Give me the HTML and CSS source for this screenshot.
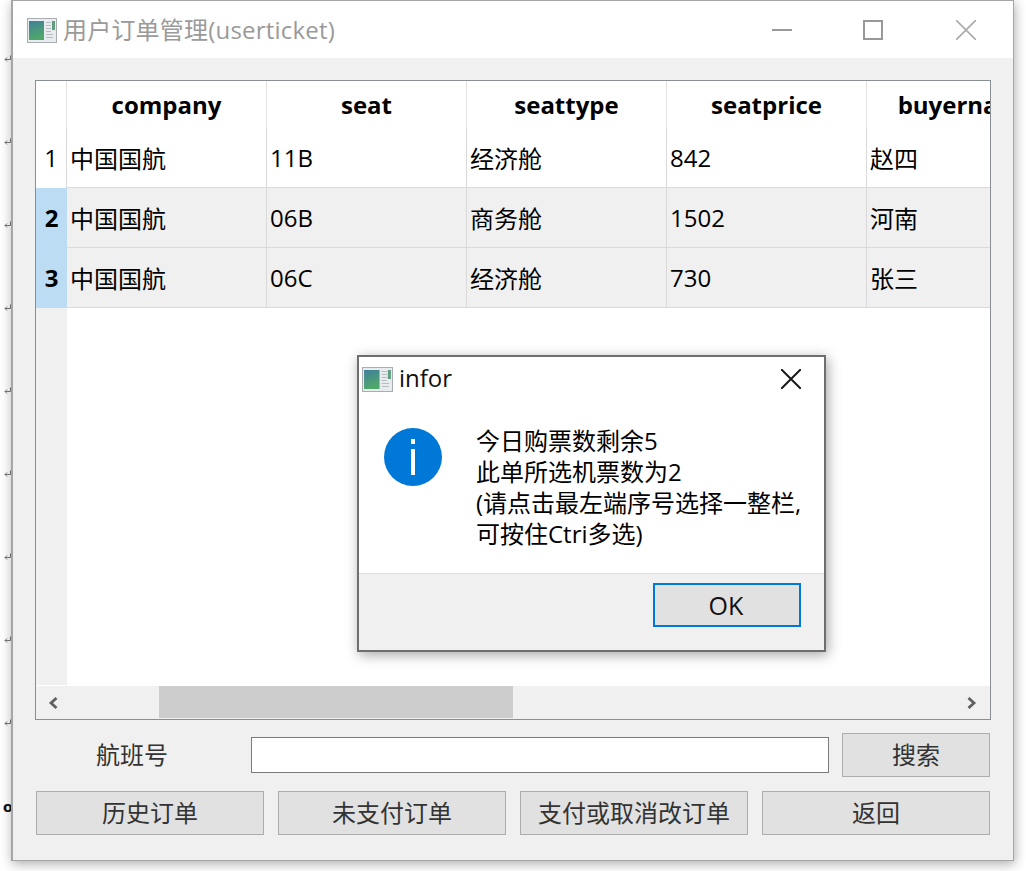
FILE: index.html
```html
<!DOCTYPE html>
<html>
<head>
  <meta charset="utf-8">
  <title>用户订单管理(userticket)</title>
  <link rel="stylesheet" href="styles.css">
</head>
<body>
  <svg class="defs" width="0" height="0">
    <symbol id="appicon" viewBox="0 0 30 25" preserveAspectRatio="none">
      <defs>
        <linearGradient id="pane" x1="0" y1="0" x2="0.3" y2="1">
          <stop offset="0" stop-color="#3f7f9a"/>
          <stop offset="1" stop-color="#4fa86a"/>
        </linearGradient>
      </defs>
      <rect x="0.5" y="0.5" width="29" height="24" fill="#e8ecef" stroke="#a9adb1"/>
      <rect x="2" y="3" width="15" height="19" fill="url(#pane)"/>
      <rect x="19" y="4" width="5" height="1" fill="#b5bcc2"/>
      <rect x="19" y="7" width="5" height="1" fill="#b5bcc2"/>
      <rect x="19" y="10" width="5" height="1" fill="#b5bcc2"/>
      <rect x="19" y="13" width="5" height="1" fill="#b5bcc2"/>
      <rect x="19" y="16" width="7" height="1" fill="#b5bcc2"/>
      <rect x="19" y="19" width="7" height="1" fill="#b5bcc2"/>
      <rect x="25" y="3" width="3" height="9" fill="#5f9f80"/>
    </symbol>
    <symbol id="retmark" viewBox="0 0 8 8">
      <path d="M6.500 0.500v4H1M3 2.500L1 4.500l2 2" fill="none" stroke="#777" stroke-width="1"/>
    </symbol>
  </svg>

  <div class="gutter">
    <div class="mark"><svg class="ret"><use href="#retmark"/></svg></div>
    <div class="mark"><svg class="ret"><use href="#retmark"/></svg></div>
    <div class="mark"><svg class="ret"><use href="#retmark"/></svg></div>
    <div class="mark"><svg class="ret"><use href="#retmark"/></svg></div>
    <div class="mark"><svg class="ret"><use href="#retmark"/></svg></div>
    <div class="mark"><svg class="ret"><use href="#retmark"/></svg></div>
    <div class="mark"><svg class="ret"><use href="#retmark"/></svg></div>
    <div class="mark"><svg class="ret"><use href="#retmark"/></svg></div>
    <div class="mark"><svg class="ret"><use href="#retmark"/></svg></div>
    <div class="mark mark-o">o</div>
  </div>

  <div class="window">
    <div class="titlebar">
      <svg class="app-icon"><use href="#appicon"/></svg>
      <span class="title">用户订单管理(userticket)</span>
      <svg class="ctl ctl-min" width="20" height="20" viewBox="0 0 20 20"><path d="M0 10h20" stroke="#999" stroke-width="2"/></svg>
      <svg class="ctl ctl-max" width="20" height="20" viewBox="0 0 20 20"><rect x="1" y="1" width="18" height="18" fill="none" stroke="#999" stroke-width="2"/></svg>
      <svg class="ctl" width="20" height="20" viewBox="0 0 20 20"><path d="M0 0l20 20M20 0L0 20" stroke="#aaa" stroke-width="1.600"/></svg>
    </div>

    <div class="content">
      <div class="frame">
        <div class="viewport">
          <table class="grid">
            <thead>
              <tr>
                <th class="corner"></th>
                <th>company</th>
                <th>seat</th>
                <th>seattype</th>
                <th>seatprice</th>
                <th>buyername</th>
              </tr>
            </thead>
            <tbody>
              <tr>
                <th class="rowno">1</th>
                <td>中国国航</td><td>11B</td><td>经济舱</td><td>842</td><td>赵四</td>
              </tr>
              <tr class="selected">
                <th class="rowno">2</th>
                <td>中国国航</td><td>06B</td><td>商务舱</td><td>1502</td><td>河南</td>
              </tr>
              <tr class="selected">
                <th class="rowno">3</th>
                <td>中国国航</td><td>06C</td><td>经济舱</td><td>730</td><td>张三</td>
              </tr>
              <tr class="filler">
                <th></th>
                <td colspan="5"></td>
              </tr>
            </tbody>
          </table>
        </div>
        <div class="hscroll">
          <svg class="arrow arrow-left" width="10" height="12" viewBox="0 0 10 12"><path d="M8.500 1L3 6l5.500 5" fill="none" stroke="#606060" stroke-width="2.800"/></svg>
          <div class="track"><div class="thumb"></div></div>
          <svg class="arrow arrow-right" width="10" height="12" viewBox="0 0 10 12"><path d="M1.500 1L7 6l-5.500 5" fill="none" stroke="#606060" stroke-width="2.800"/></svg>
        </div>
      </div>

      <div class="search-row">
        <label class="search-label">航班号</label>
        <input class="search-input" type="text">
        <button class="btn btn-search">搜索</button>
      </div>

      <div class="action-row">
        <button class="btn">历史订单</button>
        <button class="btn">未支付订单</button>
        <button class="btn">支付或取消改订单</button>
        <button class="btn">返回</button>
      </div>
    </div>
  </div>

  <div class="dialog">
    <div class="dialog-body">
      <div class="dialog-title">
        <svg class="dialog-icon"><use href="#appicon"/></svg>
        <span class="dialog-name">infor</span>
        <svg class="dialog-close" width="20" height="20" viewBox="0 0 20 20"><path d="M0 0l20 20M20 0L0 20" stroke="#1a1a1a" stroke-width="2"/></svg>
      </div>
      <div class="dialog-msg">
        <svg class="info" width="58" height="58" viewBox="0 0 58 58">
          <circle cx="29" cy="29" r="29" fill="#0078d7"/>
          <rect x="27" y="11" width="4" height="5" fill="#fff"/>
          <rect x="27" y="21" width="4" height="26" fill="#fff"/>
        </svg>
        <p class="msg-text">今日购票数剩余5<br>此单所选机票数为2<br>(请点击最左端序号选择一整栏,<br>可按住Ctri多选)</p>
      </div>
    </div>
    <div class="dialog-foot">
      <button class="btn-ok">OK</button>
    </div>
  </div>
</body>
</html>
```

FILE: styles.css
```css
* {
  box-sizing: border-box;
}
html, body {
  margin: 0;
  height: 871px;
  overflow: hidden;
  background: #fff;
}
body {
  display: flex;
  align-items: flex-start;
  font-family: "Open Sans", "Noto Sans CJK SC", sans-serif;
  font-size: 24px;
  color: #000;
}
.defs {
  position: absolute;
}

/* stray document text showing behind the window */
.gutter {
  width: 11px;
  padding-top: 55px;
  flex: none;
}
.mark {
  height: 83px;
}
.ret {
  display: block;
  width: 8px;
  height: 8px;
  margin-left: 4px;
}
.mark-o {
  margin-top: -2px;
  padding-left: 3px;
  line-height: 14px;
  font-family: "DejaVu Sans", sans-serif;
  font-weight: bold;
  font-size: 14px;
  color: #111;
}

.window {
  width: 1003px;
  height: 861px;
  flex: none;
  background: #f0f0f0;
  border: 1px solid #a6a6a6;
  border-left-width: 2px;
  box-shadow: 1px 3px 11px rgba(0, 0, 0, 0.32);
}
.titlebar {
  height: 57px;
  background: #fff;
  display: flex;
  align-items: center;
  padding-left: 14px;
}
.app-icon {
  width: 30px;
  height: 25px;
  margin-top: 1px;
}
.title {
  margin-left: 6px;
  color: #9a9a9a;
  line-height: 57px;
  letter-spacing: 0.2px;
  white-space: nowrap;
}
.ctl {
  flex: none;
  margin-right: 37px;
}
.ctl-min {
  margin-left: auto;
  margin-right: 71px;
}
.ctl-max {
  margin-right: 73px;
}
.content {
  padding: 22px 22px 0 22px;
}

.frame {
  width: 956px;
  height: 640px;
  border: 1px solid #8a8f96;
  background: #fff;
}
.viewport {
  height: 604px;
  overflow: hidden;
}
.grid {
  width: 1031px;
  height: 604px;
  table-layout: fixed;
  border-collapse: separate;
  border-spacing: 0;
}
.grid th, .grid td {
  padding: 0;
}
.grid thead th {
  height: 47px;
  width: 200px;
  font-weight: bold;
  text-align: center;
  border-right: 1px solid #e4e4e4;
  white-space: nowrap;
}
.grid thead th.corner {
  width: 31px;
}
.grid tbody tr {
  height: 60px;
}
.grid td {
  padding: 0 0 1px 3px;
  border-right: 1px solid #d9d9d9;
  border-bottom: 1px solid #d9d9d9;
  white-space: nowrap;
}
.grid .rowno {
  padding-bottom: 2px;
  font-weight: normal;
  border-right: 1px solid #d9d9d9;
  text-align: center;
}
.selected td {
  background: #f0f0f0;
}
.grid .selected .rowno {
  font-weight: bold;
  background: #bbdcf3;
  border-right: 0;
}
.grid tbody .filler {
  height: auto;
}
.filler th {
  background: #f0f0f0;
}
.grid .filler td {
  border: 0;
  background: #fff;
}

.hscroll {
  height: 33px;
  margin-top: 1px;
  background: #f0f0f0;
  display: flex;
  align-items: center;
}
.arrow {
  flex: none;
}
.arrow-left {
  margin: 0 14px 0 12px;
}
.arrow-right {
  margin: 0 13px 0 14px;
}
.track {
  flex: 1;
  height: 100%;
}
.thumb {
  margin-left: 87px;
  width: 354px;
  height: 32px;
  background: #cdcdcd;
}

.search-row {
  display: flex;
  align-items: center;
  gap: 13px;
  margin: 13px 1px 0;
  height: 44px;
}
.search-label {
  width: 202px;
  padding: 0 0 4px 60px;
  color: #333;
}
.search-input {
  width: 578px;
  height: 36px;
  margin-right: 0;
  border: 1px solid #7a7a7a;
  background: #fff;
}
.btn {
  height: 44px;
  width: 228px;
  font: inherit;
  color: #333;
  background: #e1e1e1;
  border: 1px solid #adadad;
  padding: 0 0 4px;
}
.btn-search {
  width: 148px;
}
.action-row {
  display: flex;
  gap: 14px;
  margin: 14px 1px 0;
}

.dialog {
  position: absolute;
  left: 357px;
  top: 355px;
  width: 469px;
  height: 297px;
  border: 2px solid #6e6e6e;
  background: #f0f0f0;
  box-shadow: 2px 3px 12px rgba(0, 0, 0, 0.35);
  display: flex;
  flex-direction: column;
}
.dialog-body {
  height: 217px;
  background: #fff;
  border-bottom: 1px solid #dfdfdf;
}
.dialog-title {
  height: 44px;
  display: flex;
  align-items: center;
  padding: 0 23px 0 3px;
}
.dialog-icon {
  width: 31px;
  height: 25px;
}
.dialog-name {
  margin: -3px 0 0 6px;
  color: #111;
}
.dialog-close {
  margin-left: auto;
}
.dialog-msg {
  display: flex;
  padding: 27px 0 0 25px;
}
.info {
  flex: none;
}
.msg-text {
  margin: -3px 0 0 34px;
  line-height: 31px;
  white-space: nowrap;
}
.dialog-foot {
  flex: 1;
  display: flex;
  justify-content: flex-end;
  padding: 9px 23px 0 0;
}
.btn-ok {
  width: 148px;
  height: 44px;
  font: inherit;
  font-size: 25px;
  color: #111;
  background: #e1e1e1;
  border: 2px solid #0078d7;
  padding: 0 2px 0 0;
}
```
